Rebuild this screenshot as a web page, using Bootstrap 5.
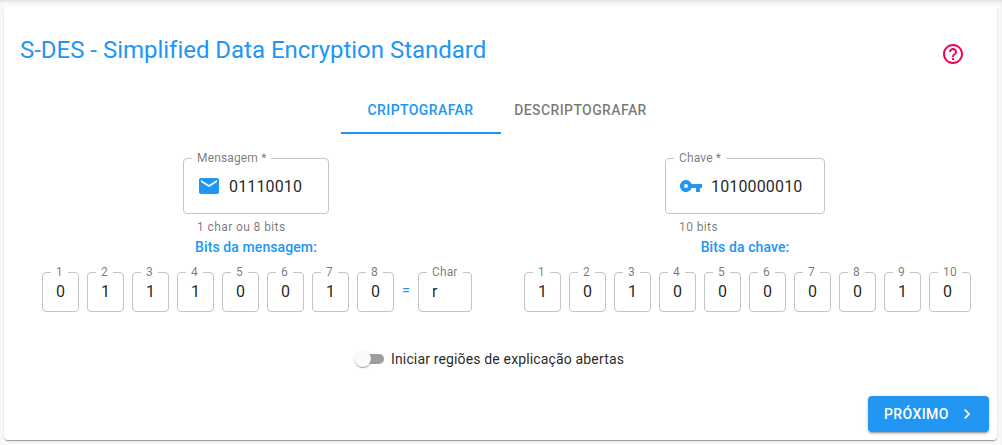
<!DOCTYPE html>
<html lang="pt-BR">
<head>
<meta charset="utf-8">
<meta name="viewport" content="width=device-width, initial-scale=1">
<title>S-DES</title>
<link href="https://cdn.jsdelivr.net/npm/bootstrap@5.3.0/dist/css/bootstrap.min.css" rel="stylesheet">
<style>
  :root { --blue: #2196f3; --ink: rgba(0,0,0,.87); --soft: rgba(0,0,0,.54); }
  body { background: #fafafa; font-family: Roboto, "Liberation Sans", sans-serif; color: var(--ink); height: 445px; overflow: hidden; padding: 6px 5px 5px 4px; box-shadow: inset 0 3px 4px -2px rgba(0,0,0,.14); }
  .panel { height: 434px; background: #fff; border: 0; border-radius: 4px; color: var(--ink);
    box-shadow: 0 2px 1px -1px rgba(0,0,0,.2), 0 1px 1px 0 rgba(0,0,0,.14), 0 1px 3px 0 rgba(0,0,0,.12); }
  .panel-head { height: 81px; padding: 28px 32px 0 16px; }
  .panel-head h1 { font-size: 24px; line-height: 32px; font-weight: 400; letter-spacing: -.02px; color: var(--blue); }
  .help { color: #f50057; margin-top: 8px; }
  svg { display: block; fill: currentColor; flex: none; }
  .mode-tabs { height: 48px; margin-bottom: 23px; padding-left: 1px; }
  .mode-tabs .nav-link { width: 160px; height: 47px; padding: 11px 1px 0 0; font-size: 14px; line-height: 24px; font-weight: 500; letter-spacing: .02857em; color: var(--soft); border-bottom: 2px solid transparent; border-radius: 0; white-space: nowrap; text-align: center; }
  .mode-tabs .nav-link.active { color: var(--blue); border-color: var(--blue); }
  .side-l { width: 504px; }
  .side-r { width: 474px; }
  .side-l .bits { margin-left: 2px; }
  .side-r .bits { margin-left: 5px; }
  .field { position: relative; height: 40px; width: 37px; border: 1px solid #c4c4c4; border-radius: 4px; padding: 0 13px 2px; font-size: 16px; letter-spacing: .00938em; line-height: 19px; }
  .field label { position: absolute; left: 8px; top: -9px; padding: 0 5px; background: #fff; font-size: 12px; line-height: 16px; color: var(--soft); white-space: nowrap; }
  .tall { height: 56px; padding-bottom: 0; }
  .tall svg { color: var(--blue); margin-right: 8px; }
  .hint { font-size: 12px; line-height: 20px; letter-spacing: .03333em; color: var(--soft); margin: 3px 14px 0; }
  .caption { font-size: 14px; line-height: 22px; font-weight: 500; letter-spacing: .00714em; color: var(--blue); margin: -1px 0 14px; }
  .bits { gap: 8px; }
  .w-msg { width: 146px; }
  .w-key { width: 160px; }
  .w-char { width: 54px; }
  .w-ten { width: 42px; }
  .side-r .caption, .side-r .w-key { position: relative; }
  .equals { font-size: 14px; font-weight: 500; color: var(--blue); line-height: 20px; margin-top: -5px; }
  .option { height: 24px; margin-top: 35px; font-size: 14px; letter-spacing: .01071em; padding-left: 354px; }
  .track { width: 26px; height: 10px; border-radius: 5px; background: #9e9e9e; margin-right: 7px; }
  .thumb { display: block; width: 16px; height: 16px; border-radius: 50%; background: #fafafa; margin: -3px 0 0 -3px; box-shadow: 0 2px 1px -1px rgba(0,0,0,.2), 0 1px 1px rgba(0,0,0,.14), 0 1px 3px rgba(0,0,0,.12); }
  .btn-next { width: 121px; height: 36px; padding: 0 0 0 16px; margin: 25px 8px 0 0; font-size: 14px; font-weight: 500; letter-spacing: .02857em; color: #fff; background: var(--blue); border: 0; border-radius: 4px;
    box-shadow: 0 3px 1px -2px rgba(0,0,0,.2), 0 2px 2px rgba(0,0,0,.14), 0 1px 5px rgba(0,0,0,.12); }
  .btn-next svg { margin-left: 8px; }
</style>
</head>
<body>
<main class="card panel">
  <header class="panel-head d-flex justify-content-between align-items-start">
    <h1 class="m-0">S-DES - Simplified Data Encryption Standard</h1>
    <svg class="help" width="24" height="24" viewBox="0 0 24 24"><path d="M11 18h2v-2h-2v2zm1-16C6.480 2 2 6.480 2 12s4.480 10 10 10 10-4.480 10-10S17.520 2 12 2zm0 18c-4.410 0-8-3.590-8-8s3.590-8 8-8 8 3.590 8 8-3.590 8-8 8zm0-14c-2.210 0-4 1.790-4 4h2c0-1.100.9-2 2-2s2 .9 2 2c0 2-3 1.750-3 5h2c0-2.250 3-2.500 3-5 0-2.210-1.790-4-4-4z"/></svg>
  </header>

  <nav class="nav mode-tabs justify-content-center">
    <a class="nav-link active" href="#">CRIPTOGRAFAR</a>
    <a class="nav-link" href="#">DESCRIPTOGRAFAR</a>
  </nav>

  <div class="d-flex">
    <section class="side-l d-flex flex-column align-items-center">
      <div>
        <div class="field tall w-msg d-flex align-items-center"><label>Mensagem *</label>
          <svg width="24" height="24" viewBox="0 0 24 24"><path d="M20 4H4c-1.100 0-1.990.9-1.990 2L2 18c0 1.100.9 2 2 2h16c1.100 0 2-.9 2-2V6c0-1.100-.9-2-2-2zm0 4l-8 5-8-5V6l8 5 8-5v2z"/></svg>
          <span>01110010</span></div>
        <div class="hint">1 char ou 8 bits</div>
      </div>
      <div class="caption">Bits da mensagem:</div>
      <div class="bits d-flex align-items-center">
        <div class="field d-flex align-items-center"><label>1</label>0</div>
        <div class="field d-flex align-items-center"><label>2</label>1</div>
        <div class="field d-flex align-items-center"><label>3</label>1</div>
        <div class="field d-flex align-items-center"><label>4</label>1</div>
        <div class="field d-flex align-items-center"><label>5</label>0</div>
        <div class="field d-flex align-items-center"><label>6</label>0</div>
        <div class="field d-flex align-items-center"><label>7</label>1</div>
        <div class="field d-flex align-items-center"><label>8</label>0</div>
        <span class="equals">=</span>
        <div class="field w-char d-flex align-items-center"><label>Char</label>r</div>
      </div>
    </section>

    <section class="side-r d-flex flex-column align-items-center">
      <div>
        <div class="field tall w-key d-flex align-items-center"><label>Chave *</label>
          <svg width="24" height="24" viewBox="0 0 24 24"><path d="M12.650 10C11.830 7.670 9.610 6 7 6c-3.310 0-6 2.690-6 6s2.690 6 6 6c2.610 0 4.830-1.670 5.650-4H17v4h4v-4h2v-4H12.650zM7 14c-1.100 0-2-.9-2-2s.9-2 2-2 2 .9 2 2-.9 2-2 2z"/></svg>
          <span>1010000010</span></div>
        <div class="hint">10 bits</div>
      </div>
      <div class="caption">Bits da chave:</div>
      <div class="bits d-flex align-items-center">
        <div class="field d-flex align-items-center"><label>1</label>1</div>
        <div class="field d-flex align-items-center"><label>2</label>0</div>
        <div class="field d-flex align-items-center"><label>3</label>1</div>
        <div class="field d-flex align-items-center"><label>4</label>0</div>
        <div class="field d-flex align-items-center"><label>5</label>0</div>
        <div class="field d-flex align-items-center"><label>6</label>0</div>
        <div class="field d-flex align-items-center"><label>7</label>0</div>
        <div class="field d-flex align-items-center"><label>8</label>0</div>
        <div class="field d-flex align-items-center"><label>9</label>1</div>
        <div class="field w-ten d-flex align-items-center"><label>10</label>0</div>
      </div>
    </section>
  </div>

  <div class="option d-flex align-items-center">
    <span class="track"><span class="thumb"></span></span>
    <span>Iniciar regiões de explicação abertas</span>
  </div>

  <button class="btn btn-next d-flex align-items-center align-self-end" type="button">PRÓXIMO
    <svg width="20" height="20" viewBox="0 0 24 24"><path d="M10 6L8.590 7.410 13.170 12l-4.580 4.590L10 18l6-6z"/></svg>
  </button>
</main>
<script src="https://cdn.jsdelivr.net/npm/bootstrap@5.3.0/dist/js/bootstrap.bundle.min.js"></script>
</body>
</html>
